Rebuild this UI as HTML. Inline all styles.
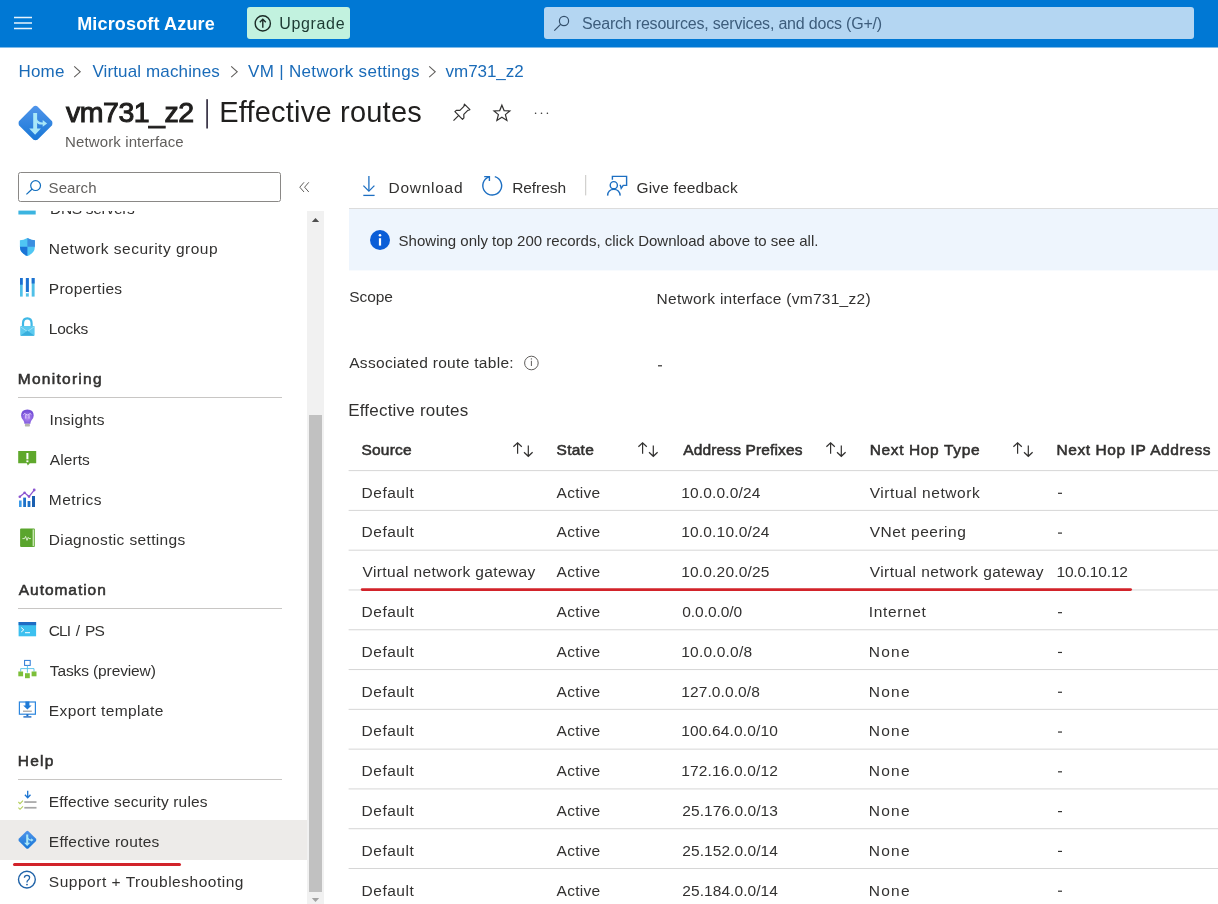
<!DOCTYPE html><html><head><meta charset="utf-8"><style>html,body{margin:0;padding:0;width:1218px;height:904px;overflow:hidden;background:#fff;}body{position:relative;font-family:"Liberation Sans", sans-serif;}.t{position:absolute;white-space:nowrap;}svg{position:absolute;left:0;top:0;}</style></head><body><svg width="1218" height="904" viewBox="0 0 1218 904"><rect x="0" y="0" width="1218" height="47.5" fill="#0078d4"/><rect x="14" y="16.75" width="18" height="1.5" fill="#e8f3fc"/><rect x="14" y="22.25" width="18" height="1.5" fill="#e8f3fc"/><rect x="14" y="27.75" width="18" height="1.5" fill="#e8f3fc"/><rect x="247" y="7" width="103" height="32" rx="3" fill="#c2f2df"/><circle cx="262.8" cy="23.4" r="7.6" fill="none" stroke="#1b2b26" stroke-width="1.4"/><path d="M262.8 27.8 V19.4 M259.8 22.2 L262.8 19.2 L265.8 22.2" fill="none" stroke="#1b2b26" stroke-width="1.4"/><rect x="544" y="7" width="650" height="32" rx="3" fill="#b4d6f2"/><circle cx="564" cy="21" r="4.6" fill="none" stroke="#34506c" stroke-width="1.2"/><path d="M554.3 30.7 L560.8 24.2" stroke="#34506c" stroke-width="1.2"/><path d="M74.2 66.4 L80.2 71.8 L74.2 77.2" fill="none" stroke="#605e5c" stroke-width="1.1"/><path d="M231.2 66.4 L237.2 71.8 L231.2 77.2" fill="none" stroke="#605e5c" stroke-width="1.1"/><path d="M429.2 66.4 L435.2 71.8 L429.2 77.2" fill="none" stroke="#605e5c" stroke-width="1.1"/><g transform="translate(35.5,123.2) scale(1.0)"><defs><linearGradient id="dg123" x1="0" y1="-17" x2="0" y2="17" gradientUnits="userSpaceOnUse"><stop offset="0" stop-color="#4f94ea"/><stop offset="1" stop-color="#1877d6"/></linearGradient></defs><path d="M0 -17.4 Q1.2 -17.4 2 -16.6 L16.6 -2 Q17.4 0 16.6 2 L2 16.6 Q0 17.4 -2 16.6 L-16.6 2 Q-17.4 0 -16.6 -2 L-2 -16.6 Q-1.2 -17.4 0 -17.4Z" fill="url(#dg123)"/><path d="M-2.3 -10.2 H1.6 V5.4 H5.4 L-0.4 11.6 L-6.3 5.4 H-2.3Z" fill="#a9e7f8"/><path d="M1.2 -4.4 Q3.2 -0.6 6.8 -0.6 H7.2 V-3.2 L11.6 0.3 L7.2 3.6 V1.4 H6.2 Q2.4 1.4 0.6 -1.8Z" fill="#a9e7f8"/></g><rect x="206.3" y="99.2" width="1.6" height="29.3" fill="#2a2438"/><g fill="none" stroke="#323130" stroke-width="1.2" stroke-linejoin="round"><path d="M453.5 120.6 L459 115.1"/><path d="M464.4 104.2 L469.9 109.7 L467.8 110.3 L463.8 114.3 L463.9 117.9 L462.5 119.3 L454.9 111.7 L456.3 110.3 L459.9 110.4 L463.9 106.4 Z"/></g><path d="M501.9 105.2 L504.1 110.6 L509.8 110.9 L505.4 114.6 L506.9 120.4 L501.9 117.2 L496.9 120.4 L498.4 114.6 L494 110.9 L499.7 110.6 Z" fill="none" stroke="#323130" stroke-width="1.2" stroke-linejoin="miter"/><circle cx="535.6" cy="113.3" r="0.8" fill="#323130"/><circle cx="541.5" cy="113.3" r="0.8" fill="#323130"/><circle cx="547.4" cy="113.3" r="0.8" fill="#323130"/><rect x="18.5" y="172.5" width="262" height="29" rx="2" fill="#fff" stroke="#8a8886" stroke-width="1"/><circle cx="35.6" cy="185.6" r="4.9" fill="none" stroke="#0f6cbd" stroke-width="1.2"/><path d="M26.4 194.4 L32.2 189.0" stroke="#0f6cbd" stroke-width="1.2"/><path d="M304 182.3 L299.8 187.2 L304 192 M308.8 182.3 L304.6 187.2 L308.8 192" fill="none" stroke="#605e5c" stroke-width="1"/><rect x="307" y="211" width="17" height="693" fill="#f1f1f1"/><path d="M311.8 222 L315.5 218 L319.2 222Z" fill="#505050"/><rect x="309" y="415" width="13" height="477" fill="#c1c1c1"/><path d="M311.8 898 L315.5 902 L319.2 898Z" fill="#a3a3a3"/><rect x="0" y="820" width="307" height="40" fill="#edebe9"/><rect x="13" y="863" width="168" height="3" rx="1.5" fill="#d2232a"/><rect x="18" y="397" width="264" height="1" fill="#c8c6c4"/><rect x="18" y="608" width="264" height="1" fill="#c8c6c4"/><rect x="18" y="779" width="264" height="1" fill="#c8c6c4"/><rect x="18.4" y="210.6" width="17.3" height="3.9" fill="#3bb4e0"/><g><path d="M27.4 237.9 Q31.5 240.2 34.9 240.2 V246.5 Q34.9 253.2 27.4 256.1 Q19.9 253.2 19.9 246.5 V240.2 Q23.3 240.2 27.4 237.9Z" fill="#50c6f3"/><path d="M27.4 237.9 Q31.5 240.2 34.9 240.2 V246.8 H27.4Z" fill="#3b8ee0"/><path d="M19.9 246.8 H27.4 V256.1 Q19.9 253.2 19.9 246.5Z" fill="#1b74d6"/></g><g><rect x="20" y="278" width="2.7" height="18.6" fill="#50c0e8"/><rect x="20" y="278" width="2.7" height="6.7" fill="#1e6fd0"/><rect x="25.9" y="278" width="2.9" height="18.6" fill="#50c0e8"/><rect x="25.9" y="278" width="2.9" height="14" fill="#1e6fd0"/><rect x="25.9" y="292" width="2.9" height="1.3" fill="#fff"/><rect x="31.7" y="278" width="2.9" height="18.6" fill="#50c0e8"/><rect x="31.7" y="278" width="2.9" height="5.5" fill="#1e6fd0"/></g><g><path d="M23 327 V323.5 Q23 318.4 27.3 318.4 Q31.6 318.4 31.6 323.5 V327" fill="none" stroke="#3fb8e6" stroke-width="2.2"/><rect x="20.2" y="326" width="14.4" height="9.8" rx="1" fill="#5ccaef"/><path d="M20.2 326.5 L27.4 331.5 L34.6 326.5" fill="none" stroke="#9be0f6" stroke-width="1"/><path d="M20.2 335.8 L27.4 330.8 L34.6 335.8Z" fill="#38aedc"/></g><g><defs><radialGradient id="bulbg" cx="27.4" cy="418" r="7" gradientUnits="userSpaceOnUse"><stop offset="0" stop-color="#b48af2"/><stop offset="1" stop-color="#7650d8"/></radialGradient></defs><path d="M27.4 409.4 Q33.7 409.4 33.7 415.6 Q33.7 418.4 31.4 420.6 Q30.4 421.8 30.4 423.8 H24.4 Q24.4 421.8 23.4 420.6 Q21.1 418.4 21.1 415.6 Q21.1 409.4 27.4 409.4Z" fill="url(#bulbg)"/><rect x="24.9" y="423.8" width="5" height="2.8" rx="1.2" fill="#b4b4ac"/><path d="M23.4 414.6 Q24.6 412.6 26 414.4 Q27.4 415.6 28.8 414.4 Q30.2 412.6 31.4 414.6 M25.8 414.8 V418.6 M29 414.8 V418.6" fill="none" stroke="#eadcff" stroke-width="0.9"/></g><g><path d="M18.2 451 H36.2 V463.2 H29.8 L27.8 465.4 L26.8 463.2 H18.2Z" fill="#5fa82c"/><rect x="26.4" y="453" width="2" height="6.3" fill="#fff"/><rect x="26.4" y="460.4" width="2" height="1.8" fill="#fff"/></g><g><rect x="19" y="500.5" width="2.6" height="6.5" fill="#3c9ae8"/><rect x="23.2" y="497.6" width="2.8" height="9.4" fill="#1e72c8"/><rect x="27.6" y="501" width="2.8" height="6" fill="#1e72c8"/><rect x="32" y="496" width="3" height="11" fill="#1a5fb0"/><path d="M19.8 496.8 L24.6 492.8 L29 496.6 L34 490.4" fill="none" stroke="#8b55d0" stroke-width="1.3"/><circle cx="19.8" cy="496.8" r="1.3" fill="#8b55d0"/><circle cx="24.6" cy="492.8" r="1.3" fill="#8b55d0"/><circle cx="29" cy="496.6" r="1.3" fill="#8b55d0"/><circle cx="34.2" cy="490" r="1.4" fill="#8b55d0"/></g><g><rect x="20.1" y="528.6" width="14.8" height="18.4" rx="1" fill="#5aa52d"/><rect x="32.6" y="529.4" width="1.6" height="16.8" fill="#c8e6b0"/><path d="M22.4 538.6 H24.6 L25.6 536.4 L27 540.4 L28.2 537.4 L29 538.6 H30.8" fill="none" stroke="#e6f4dc" stroke-width="0.9"/></g><g><rect x="18.6" y="622" width="17.5" height="14.3" fill="#3cc0ef"/><rect x="18.6" y="622" width="17.5" height="3.2" fill="#1e6cc4"/><path d="M21.2 627.6 L23.8 629.8 L21.2 632" fill="none" stroke="#fff" stroke-width="1"/><rect x="25" y="632.2" width="5" height="1" fill="#fff"/></g><g><rect x="24.6" y="660.4" width="5.6" height="5" fill="#fff" stroke="#2a7ad6" stroke-width="1"/><path d="M27.4 665.6 V668.6 M20.7 671.6 V668.6 H34 V671.6 M27.4 668.6 V672.6" fill="none" stroke="#50c0e8" stroke-width="0.9"/><rect x="18.3" y="671.5" width="4.8" height="4.8" fill="#7cbf3a"/><rect x="25" y="673.2" width="4.8" height="5" fill="#7cbf3a"/><rect x="31.6" y="671.5" width="4.9" height="4.8" fill="#7cbf3a"/></g><g><rect x="19.4" y="702" width="16" height="12.2" fill="#fff" stroke="#2c86de" stroke-width="1.2"/><path d="M25.4 701.4 V705.6 H23.2 L27.4 709.4 L31.6 705.6 H29.4 V701.4Z" fill="#1f7ad6"/><rect x="23" y="710.6" width="8.8" height="1.2" fill="#a0a0a0"/><rect x="26.4" y="714.2" width="2" height="2" fill="#1e6cc4"/><rect x="23.4" y="716.2" width="8" height="1.4" fill="#1e6cc4"/></g><g><path d="M27.7 790.8 V797.4 M24.9 794.8 L27.7 797.8 L30.5 794.8" fill="none" stroke="#1b74d2" stroke-width="1.3"/><rect x="24.3" y="801.2" width="12.2" height="1.7" fill="#a6a6a6"/><rect x="24.3" y="806.9" width="12.2" height="1.7" fill="#a6a6a6"/><path d="M18.4 802 L20 803.6 L23 800.6 M18.4 807.7 L20 809.3 L23 806.3" fill="none" stroke="#b4cf5a" stroke-width="1.1"/></g><g transform="translate(27.4,839.9) scale(0.5229885057471264)"><defs><linearGradient id="dg839" x1="0" y1="-17" x2="0" y2="17" gradientUnits="userSpaceOnUse"><stop offset="0" stop-color="#4f94ea"/><stop offset="1" stop-color="#1877d6"/></linearGradient></defs><path d="M0 -17.4 Q1.2 -17.4 2 -16.6 L16.6 -2 Q17.4 0 16.6 2 L2 16.6 Q0 17.4 -2 16.6 L-16.6 2 Q-17.4 0 -16.6 -2 L-2 -16.6 Q-1.2 -17.4 0 -17.4Z" fill="url(#dg839)"/><path d="M-2.3 -10.2 H1.6 V5.4 H5.4 L-0.4 11.6 L-6.3 5.4 H-2.3Z" fill="#a9e7f8"/><path d="M1.2 -4.4 Q3.2 -0.6 6.8 -0.6 H7.2 V-3.2 L11.6 0.3 L7.2 3.6 V1.4 H6.2 Q2.4 1.4 0.6 -1.8Z" fill="#a9e7f8"/></g><circle cx="26.9" cy="879.6" r="8.4" fill="none" stroke="#2063a8" stroke-width="1.4"/><path d="M24.4 877.8 Q24.4 875.4 27 875.4 Q29.6 875.4 29.6 877.6 Q29.6 879.2 28 880.2 Q27 880.9 27 882.2 V882.6" fill="none" stroke="#2063a8" stroke-width="1.3"/><circle cx="27" cy="884.6" r="0.9" fill="#2063a8"/><g fill="none" stroke="#1d6fc2" stroke-width="1.3"><path d="M368.9 176.1 V191"/><path d="M363.4 185.6 L368.9 191.1 L374.4 185.6"/><path d="M363.3 195.4 H374.6"/></g><g fill="none" stroke="#1d6fc2" stroke-width="1.4"><path d="M494.8 176.6 A9.4 9.4 0 1 1 489.0 176.8"/><path d="M484.2 176.6 H489.4 V181"/></g><rect x="585.2" y="175" width="1" height="20.4" fill="#c8c6c4"/><g fill="none" stroke="#1d6fc2" stroke-width="1.4"><path d="M612.4 179.8 V176.4 H626.6 V185.4 H623.2 L621.2 188.4 L620.4 185.4 H619.6"/><circle cx="613.8" cy="185.2" r="3.6"/><path d="M607.6 195.6 Q608 189.4 613.8 189.4 Q619.6 189.4 620.2 195.6"/></g><rect x="349" y="208" width="869" height="1" fill="#dcdcdc"/><rect x="349" y="209" width="869" height="61.4" fill="#eef5fd"/><circle cx="380" cy="240" r="10" fill="#0b5ed7"/><rect x="378.9" y="238.2" width="2.2" height="7.4" fill="#fff"/><circle cx="380" cy="235.2" r="1.3" fill="#fff"/><circle cx="531.4" cy="363" r="6.8" fill="none" stroke="#605e5c" stroke-width="1"/><rect x="530.9" y="360.8" width="1" height="5.2" fill="#605e5c"/><circle cx="531.4" cy="358.9" r="0.7" fill="#605e5c"/><rect x="658" y="365.2" width="4" height="1.2" fill="#323130"/><g fill="none" stroke="#323130" stroke-width="1.2"><path d="M517.6 443.4 V453.8 M513.4 446.8 L517.6 442.8 L521.8 446.8"/><path d="M528.3 445.6 V455.8 M524.0 452.2 L528.3 456.3 L532.6 452.2"/></g><g fill="none" stroke="#323130" stroke-width="1.2"><path d="M642.6 443.4 V453.8 M638.4 446.8 L642.6 442.8 L646.8 446.8"/><path d="M653.3 445.6 V455.8 M649.0 452.2 L653.3 456.3 L657.6 452.2"/></g><g fill="none" stroke="#323130" stroke-width="1.2"><path d="M830.6 443.4 V453.8 M826.4 446.8 L830.6 442.8 L834.8 446.8"/><path d="M841.3 445.6 V455.8 M837.0 452.2 L841.3 456.3 L845.6 452.2"/></g><g fill="none" stroke="#323130" stroke-width="1.2"><path d="M1017.6 443.4 V453.8 M1013.4 446.8 L1017.6 442.8 L1021.8 446.8"/><path d="M1028.3 445.6 V455.8 M1024.0 452.2 L1028.3 456.3 L1032.6 452.2"/></g><rect x="348.6" y="470.10" width="870" height="1" fill="#d6d6d6"/><rect x="348.6" y="509.89" width="870" height="1" fill="#d6d6d6"/><rect x="348.6" y="549.68" width="870" height="1" fill="#d6d6d6"/><rect x="348.6" y="589.47" width="870" height="1" fill="#d6d6d6"/><rect x="348.6" y="629.26" width="870" height="1" fill="#d6d6d6"/><rect x="348.6" y="669.05" width="870" height="1" fill="#d6d6d6"/><rect x="348.6" y="708.84" width="870" height="1" fill="#d6d6d6"/><rect x="348.6" y="748.63" width="870" height="1" fill="#d6d6d6"/><rect x="348.6" y="788.42" width="870" height="1" fill="#d6d6d6"/><rect x="348.6" y="828.21" width="870" height="1" fill="#d6d6d6"/><rect x="348.6" y="868.00" width="870" height="1" fill="#d6d6d6"/><rect x="1058.0" y="492.70" width="4" height="1.2" fill="#323130"/><rect x="1058.0" y="532.49" width="4" height="1.2" fill="#323130"/><rect x="1058.0" y="612.07" width="4" height="1.2" fill="#323130"/><rect x="1058.0" y="651.86" width="4" height="1.2" fill="#323130"/><rect x="1058.0" y="691.65" width="4" height="1.2" fill="#323130"/><rect x="1058.0" y="731.44" width="4" height="1.2" fill="#323130"/><rect x="1058.0" y="771.23" width="4" height="1.2" fill="#323130"/><rect x="1058.0" y="811.02" width="4" height="1.2" fill="#323130"/><rect x="1058.0" y="850.81" width="4" height="1.2" fill="#323130"/><rect x="1058.0" y="890.60" width="4" height="1.2" fill="#323130"/><rect x="360.8" y="588.2" width="771.2" height="2.8" rx="1.4" fill="#d2232a"/></svg><div style="position:absolute;left:0;top:0;width:1218px;height:904px;will-change:transform"><div style="position:absolute;left:0;top:211px;width:300px;height:30px;overflow:hidden"><div class="t" style="left:50px;top:-12px;font-size:15.5px;line-height:19px;letter-spacing:-0.3px;color:#323130">DNS servers</div></div><div class="t" id="t0" style="left:77.20px;top:13.00px;font-size:18px;line-height:22px;color:#ffffff;font-weight:700;letter-spacing:0.157px;">Microsoft Azure</div><div class="t" id="t1" style="left:279.20px;top:14.00px;font-size:16px;line-height:20px;color:#1d3a33;letter-spacing:0.667px;">Upgrade</div><div class="t" id="t2" style="left:582.00px;top:14.00px;font-size:16px;line-height:20px;color:#3d5d7c;letter-spacing:-0.195px;">Search resources, services, and docs (G+/)</div><div class="t" id="t3" style="left:18.60px;top:61.00px;font-size:17px;line-height:21px;color:#1a6bb8;letter-spacing:0.133px;">Home</div><div class="t" id="t4" style="left:92.40px;top:61.00px;font-size:17px;line-height:21px;color:#1a6bb8;letter-spacing:0.133px;">Virtual machines</div><div class="t" id="t5" style="left:248.00px;top:61.00px;font-size:17px;line-height:21px;color:#1a6bb8;letter-spacing:0.320px;">VM | Network settings</div><div class="t" id="t6" style="left:445.60px;top:61.00px;font-size:17px;line-height:21px;color:#1a6bb8;letter-spacing:-0.057px;">vm731_z2</div><div class="t" id="t7" style="left:66.00px;top:94.00px;font-size:28.5px;line-height:36px;color:#201f1e;letter-spacing:-0.486px;-webkit-text-stroke:1.03px #201f1e;">vm731_z2</div><div class="t" id="t8" style="left:219.20px;top:94.00px;font-size:29px;line-height:36px;color:#201f1e;letter-spacing:0.213px;">Effective routes</div><div class="t" id="t9" style="left:65.00px;top:132.00px;font-size:15px;line-height:19px;color:#605e5c;letter-spacing:0.125px;">Network interface</div><div class="t" id="t10" style="left:48.60px;top:178.00px;font-size:15px;line-height:19px;color:#605e5c;letter-spacing:0.080px;">Search</div><div class="t" id="t11" style="left:48.80px;top:239.00px;font-size:15.5px;line-height:19px;color:#323130;letter-spacing:0.486px;">Network security group</div><div class="t" id="t12" style="left:48.80px;top:279.00px;font-size:15.5px;line-height:19px;color:#323130;letter-spacing:0.289px;">Properties</div><div class="t" id="t13" style="left:48.80px;top:319.00px;font-size:15.5px;line-height:19px;color:#323130;letter-spacing:-0.250px;">Locks</div><div class="t" id="t14" style="left:49.40px;top:410.00px;font-size:15.5px;line-height:19px;color:#323130;letter-spacing:0.229px;">Insights</div><div class="t" id="t15" style="left:49.80px;top:450.00px;font-size:15.5px;line-height:19px;color:#323130;letter-spacing:0.080px;">Alerts</div><div class="t" id="t16" style="left:48.80px;top:490.00px;font-size:15.5px;line-height:19px;color:#323130;letter-spacing:0.467px;">Metrics</div><div class="t" id="t17" style="left:48.80px;top:530.00px;font-size:15.5px;line-height:19px;color:#323130;letter-spacing:0.356px;">Diagnostic settings</div><div class="t" id="t18" style="left:48.80px;top:621.00px;font-size:15.5px;line-height:19px;color:#323130;letter-spacing:-0.971px;word-spacing:2.5px;">CLI / PS</div><div class="t" id="t19" style="left:49.80px;top:661.00px;font-size:15.5px;line-height:19px;color:#323130;letter-spacing:-0.114px;">Tasks (preview)</div><div class="t" id="t20" style="left:48.80px;top:701.00px;font-size:15.5px;line-height:19px;color:#323130;letter-spacing:0.429px;">Export template</div><div class="t" id="t21" style="left:48.80px;top:792.00px;font-size:15.5px;line-height:19px;color:#323130;letter-spacing:0.174px;">Effective security rules</div><div class="t" id="t22" style="left:48.80px;top:832.00px;font-size:15.5px;line-height:19px;color:#323130;letter-spacing:0.267px;">Effective routes</div><div class="t" id="t23" style="left:48.80px;top:872.00px;font-size:15.5px;line-height:19px;color:#323130;letter-spacing:0.517px;">Support + Troubleshooting</div><div class="t" id="t24" style="left:17.80px;top:369.00px;font-size:15.5px;line-height:19px;color:#323130;letter-spacing:1.267px;-webkit-text-stroke:0.56px #323130;">Monitoring</div><div class="t" id="t25" style="left:18.80px;top:580.00px;font-size:15.5px;line-height:19px;color:#323130;letter-spacing:0.956px;-webkit-text-stroke:0.56px #323130;">Automation</div><div class="t" id="t26" style="left:17.80px;top:751.00px;font-size:15.5px;line-height:19px;color:#323130;letter-spacing:1.200px;-webkit-text-stroke:0.56px #323130;">Help</div><div class="t" id="t27" style="left:388.60px;top:178.00px;font-size:15.5px;line-height:19px;color:#323130;letter-spacing:0.714px;">Download</div><div class="t" id="t28" style="left:512.20px;top:178.00px;font-size:15.5px;line-height:19px;color:#323130;letter-spacing:-0.067px;">Refresh</div><div class="t" id="t29" style="left:636.40px;top:178.00px;font-size:15.5px;line-height:19px;color:#323130;letter-spacing:0.183px;">Give feedback</div><div class="t" id="t30" style="left:398.60px;top:231.00px;font-size:15px;line-height:19px;color:#323130;letter-spacing:0.007px;">Showing only top 200 records, click Download above to see all.</div><div class="t" id="t31" style="left:349.20px;top:287.00px;font-size:15.5px;line-height:19px;color:#323130;letter-spacing:-0.050px;">Scope</div><div class="t" id="t32" style="left:656.60px;top:289.00px;font-size:15.5px;line-height:19px;color:#323130;letter-spacing:0.267px;">Network interface (vm731_z2)</div><div class="t" id="t33" style="left:349.20px;top:353.00px;font-size:15.5px;line-height:19px;color:#323130;letter-spacing:0.309px;">Associated route table:</div><div class="t" id="t34" style="left:348.20px;top:400.00px;font-size:17px;line-height:21px;color:#323130;letter-spacing:0.213px;">Effective routes</div><div class="t" id="t35" style="left:361.50px;top:440.00px;font-size:15.5px;line-height:19px;color:#323130;letter-spacing:0.200px;-webkit-text-stroke:0.56px #323130;">Source</div><div class="t" id="t36" style="left:556.60px;top:440.00px;font-size:15.5px;line-height:19px;color:#323130;letter-spacing:0.250px;-webkit-text-stroke:0.56px #323130;">State</div><div class="t" id="t37" style="left:683.30px;top:440.00px;font-size:15.5px;line-height:19px;color:#323130;letter-spacing:0.133px;-webkit-text-stroke:0.56px #323130;">Address Prefixes</div><div class="t" id="t38" style="left:869.70px;top:440.00px;font-size:15.5px;line-height:19px;color:#323130;letter-spacing:0.633px;-webkit-text-stroke:0.56px #323130;">Next Hop Type</div><div class="t" id="t39" style="left:1056.50px;top:440.00px;font-size:15.5px;line-height:19px;color:#323130;letter-spacing:0.578px;-webkit-text-stroke:0.56px #323130;">Next Hop IP Address</div><div class="t" id="t40" style="left:361.50px;top:483.00px;font-size:15.5px;line-height:19px;color:#323130;letter-spacing:0.533px;">Default</div><div class="t" id="t41" style="left:556.60px;top:483.00px;font-size:15.5px;line-height:19px;color:#323130;letter-spacing:0.240px;">Active</div><div class="t" id="t42" style="left:681.30px;top:483.00px;font-size:15.5px;line-height:19px;color:#323130;letter-spacing:0.140px;">10.0.0.0/24</div><div class="t" id="t43" style="left:869.70px;top:483.00px;font-size:15.5px;line-height:19px;color:#323130;letter-spacing:0.557px;">Virtual network</div><div class="t" id="t44" style="left:361.50px;top:522.00px;font-size:15.5px;line-height:19px;color:#323130;letter-spacing:0.533px;">Default</div><div class="t" id="t45" style="left:556.60px;top:522.00px;font-size:15.5px;line-height:19px;color:#323130;letter-spacing:0.240px;">Active</div><div class="t" id="t46" style="left:681.30px;top:522.00px;font-size:15.5px;line-height:19px;color:#323130;letter-spacing:0.164px;">10.0.10.0/24</div><div class="t" id="t47" style="left:869.70px;top:522.00px;font-size:15.5px;line-height:19px;color:#323130;letter-spacing:0.509px;">VNet peering</div><div class="t" id="t48" style="left:362.50px;top:562.00px;font-size:15.5px;line-height:19px;color:#323130;letter-spacing:0.391px;">Virtual network gateway</div><div class="t" id="t49" style="left:556.60px;top:562.00px;font-size:15.5px;line-height:19px;color:#323130;letter-spacing:0.240px;">Active</div><div class="t" id="t50" style="left:681.30px;top:562.00px;font-size:15.5px;line-height:19px;color:#323130;letter-spacing:0.164px;">10.0.20.0/25</div><div class="t" id="t51" style="left:869.70px;top:562.00px;font-size:15.5px;line-height:19px;color:#323130;letter-spacing:0.436px;">Virtual network gateway</div><div class="t" id="t52" style="left:1056.50px;top:562.00px;font-size:15.5px;line-height:19px;color:#323130;letter-spacing:-0.222px;">10.0.10.12</div><div class="t" id="t53" style="left:361.50px;top:602.00px;font-size:15.5px;line-height:19px;color:#323130;letter-spacing:0.533px;">Default</div><div class="t" id="t54" style="left:556.60px;top:602.00px;font-size:15.5px;line-height:19px;color:#323130;letter-spacing:0.240px;">Active</div><div class="t" id="t55" style="left:682.30px;top:602.00px;font-size:15.5px;line-height:19px;color:#323130;letter-spacing:-0.050px;">0.0.0.0/0</div><div class="t" id="t56" style="left:868.70px;top:602.00px;font-size:15.5px;line-height:19px;color:#323130;letter-spacing:0.657px;">Internet</div><div class="t" id="t57" style="left:361.50px;top:642.00px;font-size:15.5px;line-height:19px;color:#323130;letter-spacing:0.533px;">Default</div><div class="t" id="t58" style="left:556.60px;top:642.00px;font-size:15.5px;line-height:19px;color:#323130;letter-spacing:0.240px;">Active</div><div class="t" id="t59" style="left:681.30px;top:642.00px;font-size:15.5px;line-height:19px;color:#323130;letter-spacing:0.200px;">10.0.0.0/8</div><div class="t" id="t60" style="left:868.70px;top:642.00px;font-size:15.5px;line-height:19px;color:#323130;letter-spacing:1.267px;">None</div><div class="t" id="t61" style="left:361.50px;top:682.00px;font-size:15.5px;line-height:19px;color:#323130;letter-spacing:0.533px;">Default</div><div class="t" id="t62" style="left:556.60px;top:682.00px;font-size:15.5px;line-height:19px;color:#323130;letter-spacing:0.240px;">Active</div><div class="t" id="t63" style="left:681.30px;top:682.00px;font-size:15.5px;line-height:19px;color:#323130;letter-spacing:0.100px;">127.0.0.0/8</div><div class="t" id="t64" style="left:868.70px;top:682.00px;font-size:15.5px;line-height:19px;color:#323130;letter-spacing:1.267px;">None</div><div class="t" id="t65" style="left:361.50px;top:721.00px;font-size:15.5px;line-height:19px;color:#323130;letter-spacing:0.533px;">Default</div><div class="t" id="t66" style="left:556.60px;top:721.00px;font-size:15.5px;line-height:19px;color:#323130;letter-spacing:0.240px;">Active</div><div class="t" id="t67" style="left:681.30px;top:721.00px;font-size:15.5px;line-height:19px;color:#323130;letter-spacing:0.150px;">100.64.0.0/10</div><div class="t" id="t68" style="left:868.70px;top:721.00px;font-size:15.5px;line-height:19px;color:#323130;letter-spacing:1.267px;">None</div><div class="t" id="t69" style="left:361.50px;top:761.00px;font-size:15.5px;line-height:19px;color:#323130;letter-spacing:0.533px;">Default</div><div class="t" id="t70" style="left:556.60px;top:761.00px;font-size:15.5px;line-height:19px;color:#323130;letter-spacing:0.240px;">Active</div><div class="t" id="t71" style="left:681.30px;top:761.00px;font-size:15.5px;line-height:19px;color:#323130;letter-spacing:0.150px;">172.16.0.0/12</div><div class="t" id="t72" style="left:868.70px;top:761.00px;font-size:15.5px;line-height:19px;color:#323130;letter-spacing:1.267px;">None</div><div class="t" id="t73" style="left:361.50px;top:801.00px;font-size:15.5px;line-height:19px;color:#323130;letter-spacing:0.533px;">Default</div><div class="t" id="t74" style="left:556.60px;top:801.00px;font-size:15.5px;line-height:19px;color:#323130;letter-spacing:0.240px;">Active</div><div class="t" id="t75" style="left:682.30px;top:801.00px;font-size:15.5px;line-height:19px;color:#323130;letter-spacing:0.067px;">25.176.0.0/13</div><div class="t" id="t76" style="left:868.70px;top:801.00px;font-size:15.5px;line-height:19px;color:#323130;letter-spacing:1.267px;">None</div><div class="t" id="t77" style="left:361.50px;top:841.00px;font-size:15.5px;line-height:19px;color:#323130;letter-spacing:0.533px;">Default</div><div class="t" id="t78" style="left:556.60px;top:841.00px;font-size:15.5px;line-height:19px;color:#323130;letter-spacing:0.240px;">Active</div><div class="t" id="t79" style="left:682.30px;top:841.00px;font-size:15.5px;line-height:19px;color:#323130;letter-spacing:0.067px;">25.152.0.0/14</div><div class="t" id="t80" style="left:868.70px;top:841.00px;font-size:15.5px;line-height:19px;color:#323130;letter-spacing:1.267px;">None</div><div class="t" id="t81" style="left:361.50px;top:881.00px;font-size:15.5px;line-height:19px;color:#323130;letter-spacing:0.533px;">Default</div><div class="t" id="t82" style="left:556.60px;top:881.00px;font-size:15.5px;line-height:19px;color:#323130;letter-spacing:0.240px;">Active</div><div class="t" id="t83" style="left:682.30px;top:881.00px;font-size:15.5px;line-height:19px;color:#323130;letter-spacing:0.067px;">25.184.0.0/14</div><div class="t" id="t84" style="left:868.70px;top:881.00px;font-size:15.5px;line-height:19px;color:#323130;letter-spacing:1.267px;">None</div></div></body></html>
